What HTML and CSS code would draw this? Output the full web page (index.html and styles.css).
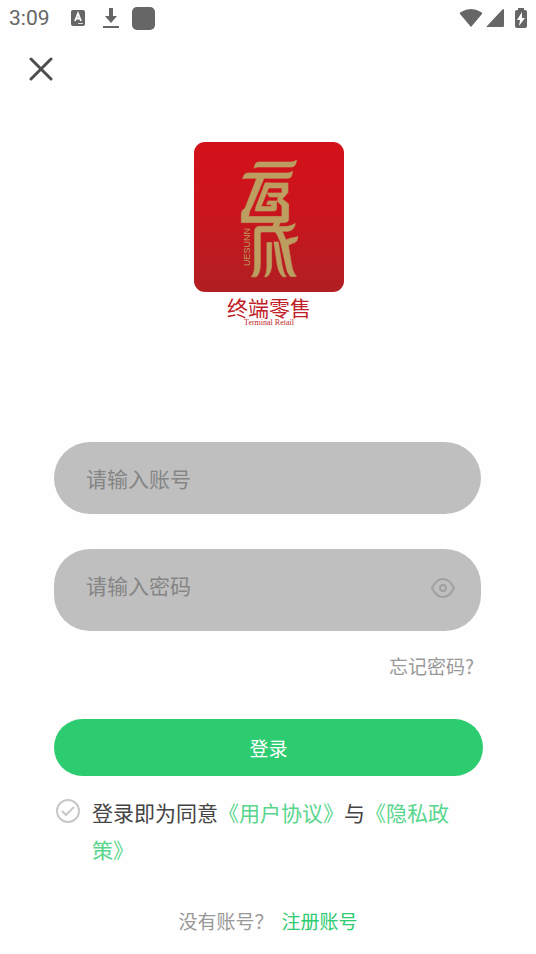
FILE: index.html
```
<!DOCTYPE html>
<html lang="zh-CN">
<head>
  <meta charset="UTF-8" />
  <meta name="viewport" content="width=device-width, initial-scale=1.0" />
  <title>登录</title>
  <link rel="stylesheet" href="styles.css">
</head>
<body>
  <div class="status-bar">
    <span class="time">3:09</span>
    <svg class="icon-lang" viewBox="0 0 16 16">
      <rect x="1" y="0" width="14" height="16" rx="2" fill="#666"/>
      <path d="M5 11 L8 3.500 L11 11 M6 8.500 H10" fill="none" stroke="#fff" stroke-width="1.800"/>
      <path d="M8 13.500 H13" stroke="#ddd" stroke-width="1"/>
    </svg>
    <svg class="icon-download" viewBox="0 0 16 22">
      <path d="M8 1 V11" stroke="#666" stroke-width="4"/>
      <path d="M2 9 H14 L8 16 Z" fill="#666"/>
      <path d="M0 20 H16" stroke="#666" stroke-width="2"/>
    </svg>
    <span class="app-dot"></span>
    <span class="status-space"></span>
    <svg class="icon-wifi" viewBox="0 0 24 20">
      <path d="M12 19 L1 6 Q0 5 2 4 Q12 -2 22 4 Q24 5 23 6 Z" fill="#666"/>
    </svg>
    <svg class="icon-signal" viewBox="0 0 18 18">
      <path d="M18 1 V17 Q18 18 17 18 H1 Q0 18 1 17 L16 1 Q18 -1 18 1 Z" fill="#666"/>
    </svg>
    <svg class="icon-battery" viewBox="0 0 12 20">
      <path d="M3 2 V0 H9 V2 H10 Q12 2 12 4 V18 Q12 20 10 20 H2 Q0 20 0 18 V4 Q0 2 2 2 Z" fill="#666"/>
      <path d="M7 4 L2 12 H5 L4 18 L10 10 H7 Z" fill="#fff"/>
    </svg>
  </div>

  <header>
    <button class="close-btn" type="button" aria-label="关闭">
      <svg viewBox="0 0 24 24"><path d="M2 2 L22 22 M22 2 L2 22" fill="none" stroke="#4d4d4d" stroke-width="3" stroke-linecap="round"/></svg>
    </button>
  </header>

  <div class="brand">
    <svg class="logo" viewBox="0 0 150 150">
      <defs>
        <linearGradient id="red" x1="0" y1="0" x2="0" y2="1">
          <stop offset="0" stop-color="#d31119"/>
          <stop offset="0.450" stop-color="#cb141d"/>
          <stop offset="1" stop-color="#b01f23"/>
        </linearGradient>
      </defs>
      <rect width="150" height="150" rx="11" fill="url(#red)"/>
      <g transform="translate(36 8) scale(0.333)" fill="#bc9e60" stroke="#bc9e60" stroke-width="2">
        <path d="M72 55 L76 42 Q78 36 87 36 H184 Q193 36 200 30 L197 43 Q194 51 184 51 H84 Q77 51 72 55 Z"/>
        <path d="M38 86 L43 74 Q46 69 55 69 H172 Q182 69 188 64 L185 77 Q182 85 172 85 H102 L66 170 Q56 184 56 200 H156 V168 L142 154 L145 140 L156 128 V114 H100 L106 99 H174 V128 L157 147 L176 162 V205 Q176 218 163 218 H34 V194 Q34 180 45 176 L80 85 H52 Q44 85 38 86 Z"/>
        <path d="M106 99 H122 L88 183 H76 Q76 172 82 160 Z"/>
        <path d="M112 129 H156 L143 141 H118 Z"/>
        <path d="M114 153 H140 V174 Q140 183 132 183 H84 L90 170 H124 V164 H110 Z"/>
        <path d="M78 233 Q82 229 90 229 H128 L134 216 H151 L146 230 H170 Q184 228 196 221 L194 230 Q188 242 175 244 H157 L168 270 L182 265 Q194 264 204 260 L201 272 Q197 279 188 280 L175 285 L184 340 Q187 365 199 380 H182 Q171 370 168 348 L152 278 Q142 252 136 246 H96 Q91 246 91 253 V344 Q91 369 79 381 H64 Q74 370 74 346 V244 Q74 237 78 233 Z"/>
        <path d="M111 278 H125 V343 Q125 369 110 381 H104 Q111 370 111 350 Z"/>
        <path d="M132 276 H145 L156 345 Q160 370 169 381 H159 Q147 370 142 345 Z"/>
      </g>
      <text class="logo-side" transform="translate(56 124) rotate(-90)">UESUNN</text>
    </svg>
    <div class="brand-name">终端零售</div>
    <div class="brand-sub">Terminal Retail</div>
  </div>

  <form class="login-form">
    <div class="field">
      <input type="text" id="account" aria-label="账号" placeholder="请输入账号">
    </div>
    <div class="field password">
      <input type="password" id="password" aria-label="密码" placeholder="请输入密码">
      <button class="eye-btn" type="button" aria-label="显示密码">
        <svg viewBox="0 0 24 20">
          <path d="M1 10 C4 4 8 1 12 1 S20 4 23 10 C20 16 16 19 12 19 S4 16 1 10 Z" fill="none" stroke="#a0a0a0" stroke-width="2"/>
          <circle cx="12" cy="10" r="3" fill="none" stroke="#a0a0a0" stroke-width="2"/>
        </svg>
      </button>
    </div>
    <a class="forgot" href="#">忘记密码?</a>
    <button class="login-btn" type="submit">登录</button>
    <div class="agreement">
      <input type="checkbox" id="agree">
      <svg class="check" viewBox="0 0 24 24">
        <circle cx="12" cy="12" r="11" fill="none" stroke="#c8c8c8" stroke-width="2"/>
        <path d="M6 12 L10 16 L18 8" fill="none" stroke="#c8c8c8" stroke-width="2"/>
      </svg>
      <label for="agree">登录即为同意<a href="#">《用户协议》</a>与<a href="#">《隐私政策》</a></label>
    </div>
  </form>

  <footer>
    <span>没有账号？</span>
    <a href="#">注册账号</a>
  </footer>
</body>
</html>
```

FILE: styles.css
```
* {
  box-sizing: border-box;
  margin: 0;
  padding: 0;
}

body {
  font-family: "Noto Sans CJK SC", sans-serif;
  background: #fefefe;
  color: #444;
}

button {
  background: none;
  border: none;
  font-family: inherit;
  cursor: pointer;
}

a {
  color: #2ecc71;
  text-decoration: none;
}

svg {
  display: block;
}

.status-bar {
  display: flex;
  align-items: center;
  height: 36px;
  padding: 0 9px;
}

.time {
  font-family: Roboto, sans-serif;
  font-size: 21px;
  color: #666;
}

.icon-lang {
  width: 16px;
  height: 16px;
  margin-left: 20px;
}

.icon-download {
  width: 16px;
  height: 22px;
  margin-left: 17px;
}

.app-dot {
  width: 23px;
  height: 23px;
  margin-left: 13px;
  border-radius: 5px;
  background: #666;
}

.status-space {
  flex: 1;
}

.icon-wifi {
  width: 24px;
  height: 20px;
}

.icon-signal {
  width: 18px;
  height: 18px;
  margin-left: 3px;
}

.icon-battery {
  width: 12px;
  height: 20px;
  margin-left: 11px;
}

header {
  padding: 21px 29px;
}

.close-btn,
.close-btn svg {
  display: block;
  width: 24px;
  height: 24px;
}

.brand {
  display: flex;
  flex-direction: column;
  align-items: center;
  margin-top: 40px;
  padding-left: 2px;
  color: #bf1e2a;
}

.logo {
  width: 150px;
  height: 150px;
}

.logo-side {
  font-family: "Liberation Sans", sans-serif;
  font-size: 9px;
  fill: #bc9e60;
}

.brand-name {
  margin-top: 4px;
  font-size: 21px;
  line-height: 22px;
}

.brand-sub {
  font-family: "Liberation Serif", serif;
  font-size: 8px;
  line-height: 9px;
}

.login-form {
  display: flex;
  flex-direction: column;
  margin-top: 115px;
  padding: 0 53px 0 54px;
}

.field {
  display: flex;
  height: 72px;
  margin-right: 2px;
  padding: 0 26px 0 32px;
  border-radius: 36px;
  background: #bfbfbf;
}

.field input {
  flex: 1;
  min-width: 0;
  height: 72px;
  border: none;
  outline: none;
  background: none;
  font-family: inherit;
  font-size: 21px;
}

.field input::placeholder {
  color: #858585;
}

.field.password {
  height: 82px;
  margin-top: 35px;
}

.eye-btn {
  align-self: center;
  margin-top: -4px;
}

.eye-btn svg {
  width: 24px;
  height: 20px;
}

.forgot {
  align-self: flex-end;
  margin: 21px 9px 0 0;
  font-size: 19px;
  line-height: 28px;
  color: #999;
}

.login-btn {
  height: 57px;
  margin-top: 39px;
  border-radius: 29px;
  background: #2ecc71;
  color: #fff;
  font-size: 19px;
}

.agreement {
  display: flex;
  align-items: flex-start;
  margin-top: 18px;
}

/* real checkbox is hidden, the svg tick stands in for it */
.agreement input {
  position: absolute;
  opacity: 0;
}

.check {
  flex: none;
  width: 24px;
  height: 24px;
  margin: 5px 12px 0 2px;
}

.agreement input:checked + .check * {
  stroke: #2ecc71;
}

.agreement label {
  margin-right: 28px;
  font-size: 21px;
  line-height: 37px;
}

.agreement label a {
  color: #58d68d;
}

footer {
  display: flex;
  justify-content: center;
  gap: 8px;
  margin-top: 39px;
  font-size: 19px;
  line-height: 28px;
  color: #999;
}
```
